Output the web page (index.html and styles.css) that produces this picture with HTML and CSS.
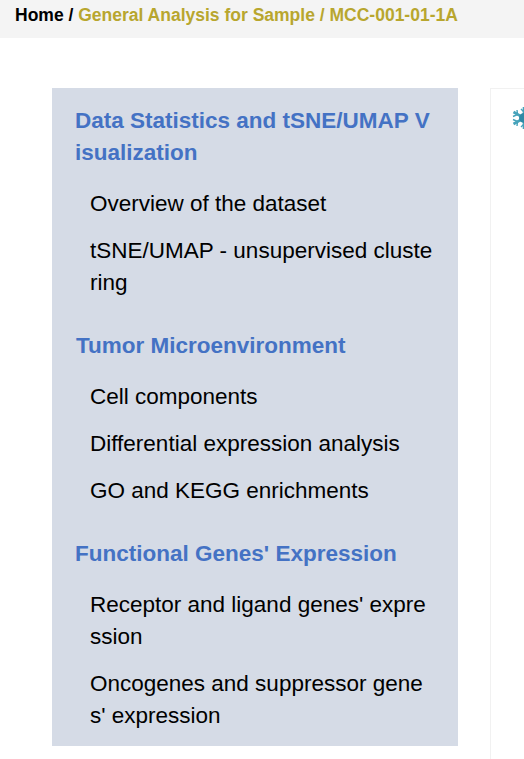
FILE: index.html
```html
<!DOCTYPE html>
<html lang="en">
<head>
<meta charset="utf-8">
<title>General Analysis for Sample</title>
<link rel="stylesheet" href="styles.css">
</head>
<body>
<nav class="crumbs"><span class="crumb-home">Home /</span> <span class="crumb-path">General Analysis for Sample / MCC-001-01-1A</span></nav>
<main class="layout">
  <aside class="sidebar">
    <section class="group">
      <h2 class="group-title">Data Statistics and tSNE/UMAP Visualization</h2>
      <p class="item">Overview of the dataset</p>
      <p class="item">tSNE/UMAP - unsupervised clustering</p>
    </section>
    <section class="group">
      <h2 class="group-title nudge">Tumor Microenvironment</h2>
      <p class="item">Cell components</p>
      <p class="item">Differential expression analysis</p>
      <p class="item">GO and KEGG enrichments</p>
    </section>
    <section class="group">
      <h2 class="group-title">Functional Genes' Expression</h2>
      <p class="item">Receptor and ligand genes' expression</p>
      <p class="item">Oncogenes and suppressor genes' expression</p>
    </section>
  </aside>
  <section class="panel">
    <svg class="flake" viewBox="0 0 24 24" width="24" height="24" aria-hidden="true">
      <g stroke="#46a3bb" stroke-width="2.6" fill="none">
        <path d="M12 1v22M1.5 6l21 12M22.5 6l-21 12"/>
        <path d="M1 10.5l4.5-2-.5-4.5M1 13.5l4.5 2-.5 4.5M9 3l3 3 3-3M9 21l3-3 3 3" stroke-width="1.4"/>
      </g>
      <circle cx="12" cy="12" r="5" fill="#2f8aa6"/>
    </svg>
  </section>
</main>
</body>
</html>
```
FILE: styles.css
```css
html, body { margin: 0; padding: 0; height: 100%; overflow: hidden; background: #fff; }
body { font-family: "Liberation Sans", Arial, sans-serif; color: #000; }
.crumbs { height: 38px; box-sizing: border-box; padding: 3px 15px 0; background: #f4f4f4; font-size: 17.5px; line-height: 24px; font-weight: 700; white-space: nowrap; }
.crumb-path { color: #b8a62e; }
.layout { display: flex; align-items: flex-start; padding: 50px 0 0 52px; gap: 32px; }
.sidebar { flex: 0 0 406px; box-sizing: border-box; padding: 17px 25px 14px 23px; background: #d5dbe6; word-break: break-all; }
.group + .group { margin-top: 31.5px; }
.group-title { margin: 0 0 18.5px; font-size: 22.5px; line-height: 32px; font-weight: 700; color: #4472c4; }
.nudge { margin-left: 1px; }
.item { margin: 15px 0 0; padding-left: 15px; font-size: 22.5px; line-height: 32px; }
.panel { flex: 1 1 0; min-width: 0; height: 671px; box-sizing: border-box; border-left: 1px solid #f1f1f1; border-top: 1px solid #f1f1f1; padding: 17px 0 0 21px; overflow: hidden; }
.flake { display: block; }
```
